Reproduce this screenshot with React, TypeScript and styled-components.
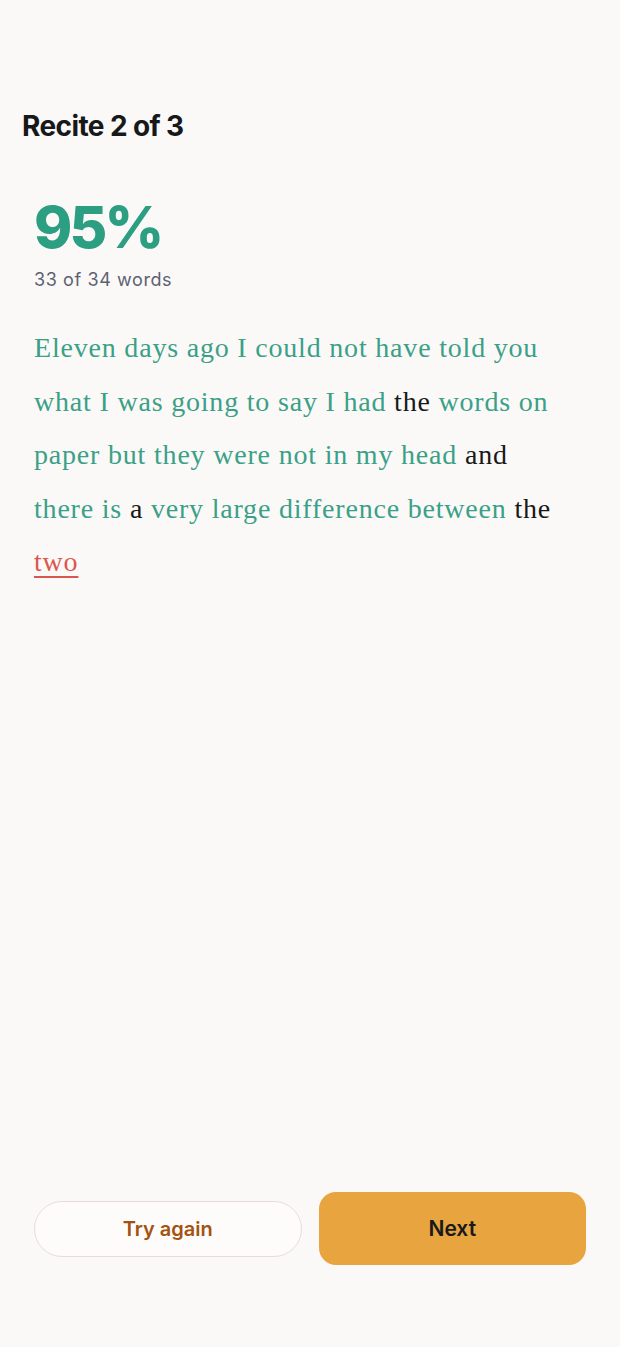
import React from "react";
import styled, { createGlobalStyle } from "styled-components";

const Global = createGlobalStyle`
  html, body { margin: 0; padding: 0; background: #fbf9f7; }
  body { font-family: Inter, "Noto Sans", sans-serif; -webkit-font-smoothing: antialiased; }
  * { box-sizing: border-box; }
`;

const Page = styled.div`
  min-height: 100vh;
  display: flex;
  flex-direction: column;
  padding: 108px 34px 82px 34px;
`;

const Title = styled.h1`
  margin: 0 0 0 -12px;
  font-family: Inter, sans-serif;
  font-weight: 700;
  font-size: 28px;
  line-height: 36px;
  letter-spacing: -0.6px;
  color: #17181a;
`;

const Score = styled.div`
  margin-top: 54px;
  font-family: Inter, sans-serif;
  font-weight: 800;
  font-size: 58px;
  line-height: 58px;
  letter-spacing: -2.8px;
  color: #2c9e82;
`;

const Count = styled.div`
  margin-top: 13px;
  font-family: Inter, sans-serif;
  font-size: 18px;
  line-height: 22px;
  letter-spacing: 0.6px;
  color: #5b6173;
`;

const Passage = styled.p`
  margin: 30px 0 0 0;
  max-width: 530px;
  font-family: "Liberation Serif", serif;
  font-size: 28px;
  line-height: 53.5px;
  letter-spacing: 0.8px;
  color: #3aa088;
`;

type Kind = "ok" | "miss" | "wrong";

const Word = styled.span<{ $kind: Kind }>`
  color: ${(p) => (p.$kind === "ok" ? "#3aa088" : p.$kind === "miss" ? "#18191b" : "#d9574e")};
  text-decoration: ${(p) => (p.$kind === "wrong" ? "underline" : "none")};
  text-decoration-thickness: 1.5px;
  text-underline-offset: 5px;
`;

const Spacer = styled.div`
  flex: 1;
`;

const Actions = styled.div`
  display: grid;
  grid-template-columns: 1fr 1fr;
  gap: 17px;
  align-items: center;
`;

const Secondary = styled.button`
  height: 56px;
  border-radius: 28px;
  border: 1.5px solid #e8dcd7;
  background: #fdfcfb;
  font-family: Inter, sans-serif;
  font-weight: 600;
  font-size: 20px;
  color: #a4520f;
`;

const Primary = styled.button`
  height: 73px;
  border-radius: 17px;
  border: none;
  background: #e8a43e;
  font-family: Inter, sans-serif;
  font-weight: 600;
  font-size: 21px;
  color: #18191b;
`;

const text =
  "Eleven days ago I could not have told you what I was going to say I had the words on paper but they were not in my head and there is a very large difference between the two";

const missed = new Set([17, 28, 31, 36]);

export default function App() {
  const words = text.split(" ");
  return (
    <>
      <Global />
      <Page>
        <Title>Recite 2 of 3</Title>
        <Score>95%</Score>
        <Count>33 of 34 words</Count>
        <Passage>
          {words.map((w, i) => {
            const kind: Kind = i === words.length - 1 ? "wrong" : missed.has(i) ? "miss" : "ok";
            return (
              <React.Fragment key={i}>
                <Word $kind={kind}>{w}</Word>
                {i < words.length - 1 ? " " : ""}
              </React.Fragment>
            );
          })}
        </Passage>
        <Spacer />
        <Actions>
          <Secondary>Try again</Secondary>
          <Primary>Next</Primary>
        </Actions>
      </Page>
    </>
  );
}
